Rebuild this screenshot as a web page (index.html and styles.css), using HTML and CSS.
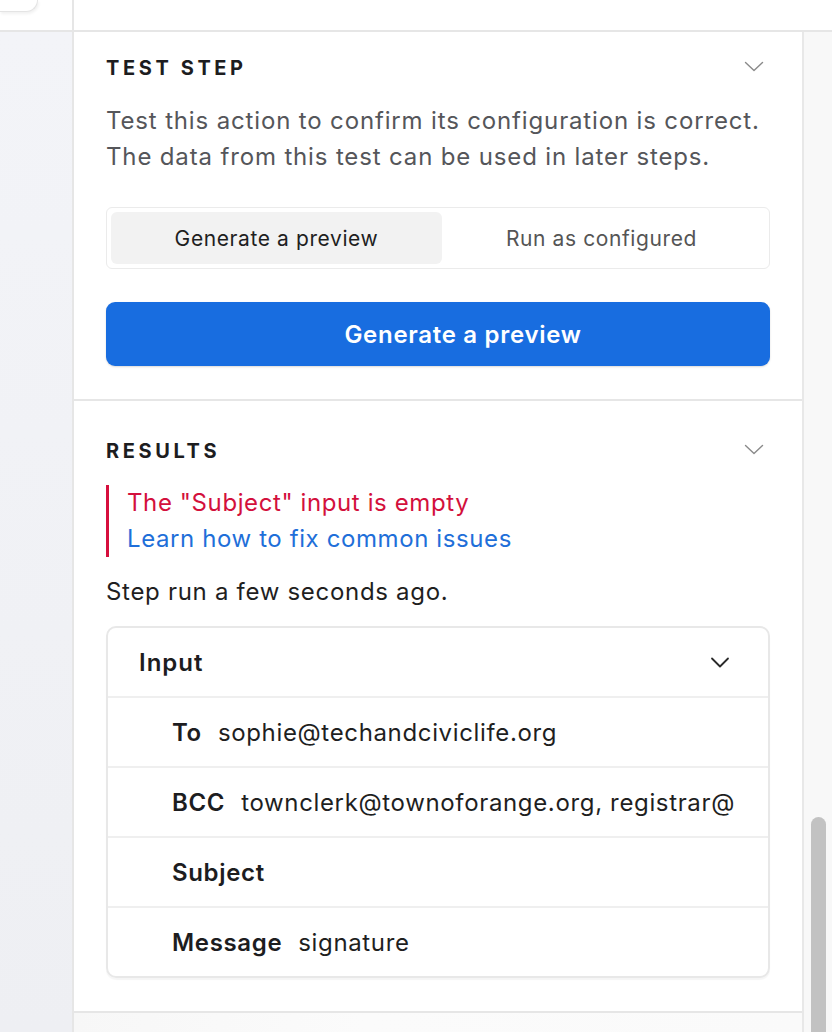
FILE: index.html
```html
<!DOCTYPE html>
<html lang="en">
<head>
<meta charset="utf-8">
<title>Test step</title>
<link rel="stylesheet" href="styles.css">
</head>
<body>
<div class="app">
  <div class="topbar">
    <div class="topbar-left"><div class="corner-card"></div></div>
    <div class="topbar-right"></div>
  </div>
  <div class="body">
    <aside class="sidebar"></aside>
    <main class="panel">
      <section class="section section-test">
        <div class="section-head">
          <h2 class="section-title">TEST STEP</h2>
          <svg class="chev chev-light" viewBox="0 0 20 11" width="20" height="11"><path d="M1.5 1.5 L10 9.5 L18.5 1.5" fill="none" stroke="currentColor" stroke-width="1.4" stroke-linecap="round" stroke-linejoin="round"/></svg>
        </div>
        <p class="desc">Test this action to confirm its configuration is correct. The data from this test can be used in later steps.</p>
        <div class="segmented">
          <div class="seg seg-active">Generate a preview</div>
          <div class="seg">Run as configured</div>
        </div>
        <button class="primary">Generate a preview</button>
      </section>
      <section class="section section-results">
        <div class="section-head">
          <h2 class="section-title">RESULTS</h2>
          <svg class="chev chev-light" viewBox="0 0 20 11" width="20" height="11"><path d="M1.5 1.5 L10 9.5 L18.5 1.5" fill="none" stroke="currentColor" stroke-width="1.4" stroke-linecap="round" stroke-linejoin="round"/></svg>
        </div>
        <div class="error">
          <div class="error-msg">The "Subject" input is empty</div>
          <a class="error-link" href="#">Learn how to fix common issues</a>
        </div>
        <p class="ran">Step run a few seconds ago.</p>
        <div class="card">
          <div class="card-head">
            <span class="card-title">Input</span>
            <svg class="chev chev-dark" viewBox="0 0 20 11" width="20" height="11"><path d="M2 1.5 L10 9.5 L18 1.5" fill="none" stroke="currentColor" stroke-width="1.8" stroke-linecap="round" stroke-linejoin="round"/></svg>
          </div>
          <div class="row"><span class="key">To</span><span class="val">sophie@techandciviclife.org</span></div>
          <div class="row"><span class="key">BCC</span><span class="val">townclerk@townoforange.org, registrar@</span></div>
          <div class="row"><span class="key">Subject</span></div>
          <div class="row"><span class="key">Message</span><span class="val">signature</span></div>
        </div>
      </section>
      <section class="section section-next"></section>
    </main>
    <div class="gutter"><div class="thumb"></div></div>
  </div>
</div>
</body>
</html>
```

FILE: styles.css
```css
* { box-sizing: border-box; }
html, body { margin: 0; padding: 0; }
body {
  width: 832px;
  height: 1032px;
  overflow: hidden;
  background: #ffffff;
  font-family: Inter, "Liberation Sans", Arial, sans-serif;
  color: #1f1f1f;
}
.app {
  display: flex;
  flex-direction: column;
  height: 1032px;
}
.topbar {
  display: flex;
  height: 32px;
  flex: 0 0 32px;
  border-bottom: 2px solid #e6e6e6;
  background: #fff;
}
.topbar-left {
  width: 74px;
  border-right: 2px solid #e6e6e6;
}
.corner-card {
  width: 38px;
  height: 12px;
  background: #fff;
  border-right: 1px solid #e4e4e4;
  border-bottom: 1px solid #e4e4e4;
  border-bottom-right-radius: 18px;
  box-shadow: 1px 2px 3px rgba(0,0,0,0.06);
}
.topbar-right { flex: 1; }
.body {
  flex: 1;
  display: flex;
  min-height: 0;
}
.sidebar {
  width: 74px;
  flex: 0 0 74px;
  background: linear-gradient(#f3f4f8, #eeeff3);
  border-right: 2px solid #e6e6e6;
}
.panel {
  width: 728px;
  flex: 0 0 728px;
  display: flex;
  flex-direction: column;
  background: #fff;
}
.gutter {
  flex: 1;
  background: #f8f8f8;
  border-left: 2px solid #e8e8e8;
  padding: 785px 6px 0 7px;
  display: flex;
  flex-direction: column;
}
.thumb {
  flex: 1;
  background: #c2c2c2;
  border-radius: 8px 8px 0 0;
}
.section {
  padding: 24px 32px 33px 32px;
  border-bottom: 2px solid #e6e6e6;
}
.section-results {
  padding-top: 38px;
  padding-bottom: 33px;
}
.section-next {
  flex: 1;
  border-bottom: none;
  background: linear-gradient(90deg, #f7f7f7, #fbfbfb 40%, #fafafa);
}
.section-head {
  display: flex;
  align-items: center;
  justify-content: space-between;
  height: 24px;
}
.section-title {
  margin: 0;
  font-size: 20px;
  font-weight: 700;
  letter-spacing: 3.6px;
  color: #1d1d1f;
  line-height: 24px;
}
.chev { display: block; }
.chev-light { color: #8a8a8a; margin-right: 6px; margin-top: -4px; }
.chev-dark { color: #2a2a2a; }
.desc {
  margin: 23px 0 0 0;
  font-size: 24px;
  line-height: 36px;
  color: #55565a;
  letter-spacing: 0.85px;
}
.segmented {
  margin-top: 32px;
  display: grid;
  grid-template-columns: 1fr 1fr;
  height: 62px;
  padding: 4px;
  border: 1px solid #ebebeb;
  border-radius: 6px;
}
.seg {
  display: flex;
  align-items: center;
  justify-content: center;
  font-size: 21px;
  letter-spacing: 0.6px;
  color: #555;
  border-radius: 6px;
}
.seg-active {
  background: #f2f2f2;
  color: #1f1f1f;
  margin-right: -4px;
}
.primary {
  margin-top: 33px;
  width: 100%;
  height: 64px;
  border: none;
  border-radius: 9px;
  padding: 0 0 0 50px;
  background: #186de0;
  color: #fff;
  font-family: inherit;
  font-size: 24px;
  letter-spacing: 0.7px;
  font-weight: 600;
  box-shadow: 0 1px 2px rgba(0,0,0,0.15);
}
.error {
  margin-top: 22px;
  border-left: 3px solid #d60f3d;
  padding-left: 18px;
  font-size: 24px;
  letter-spacing: 0.6px;
  line-height: 36px;
}
.error-msg { color: #d3103c; }
.error-link { color: #1f6fd9; text-decoration: none; display: block; }
.ran {
  margin: 17px 0 0 0;
  font-size: 24px;
  letter-spacing: 0.7px;
  line-height: 36px;
  color: #1f1f1f;
}
.card {
  margin-top: 16px;
  border: 2px solid #e8e8e8;
  border-radius: 10px;
  box-shadow: 0 2px 1px rgba(0,0,0,0.04);
  overflow: hidden;
}
.card-head {
  display: flex;
  align-items: center;
  justify-content: space-between;
  height: 68px;
  padding: 0 38px 0 31px;
}
.card-title {
  font-size: 24px;
  letter-spacing: 1px;
  font-weight: 600;
  color: #1d1d1f;
}
.row {
  display: flex;
  align-items: center;
  gap: 16px;
  height: 70px;
  border-top: 2px solid #efefef;
  padding-left: 64px;
  font-size: 24px;
  letter-spacing: 0.65px;
  white-space: nowrap;
  padding-right: 24px;
}
.key { font-weight: 600; color: #1d1d1f; }
.val { color: #1f1f1f; }
```
